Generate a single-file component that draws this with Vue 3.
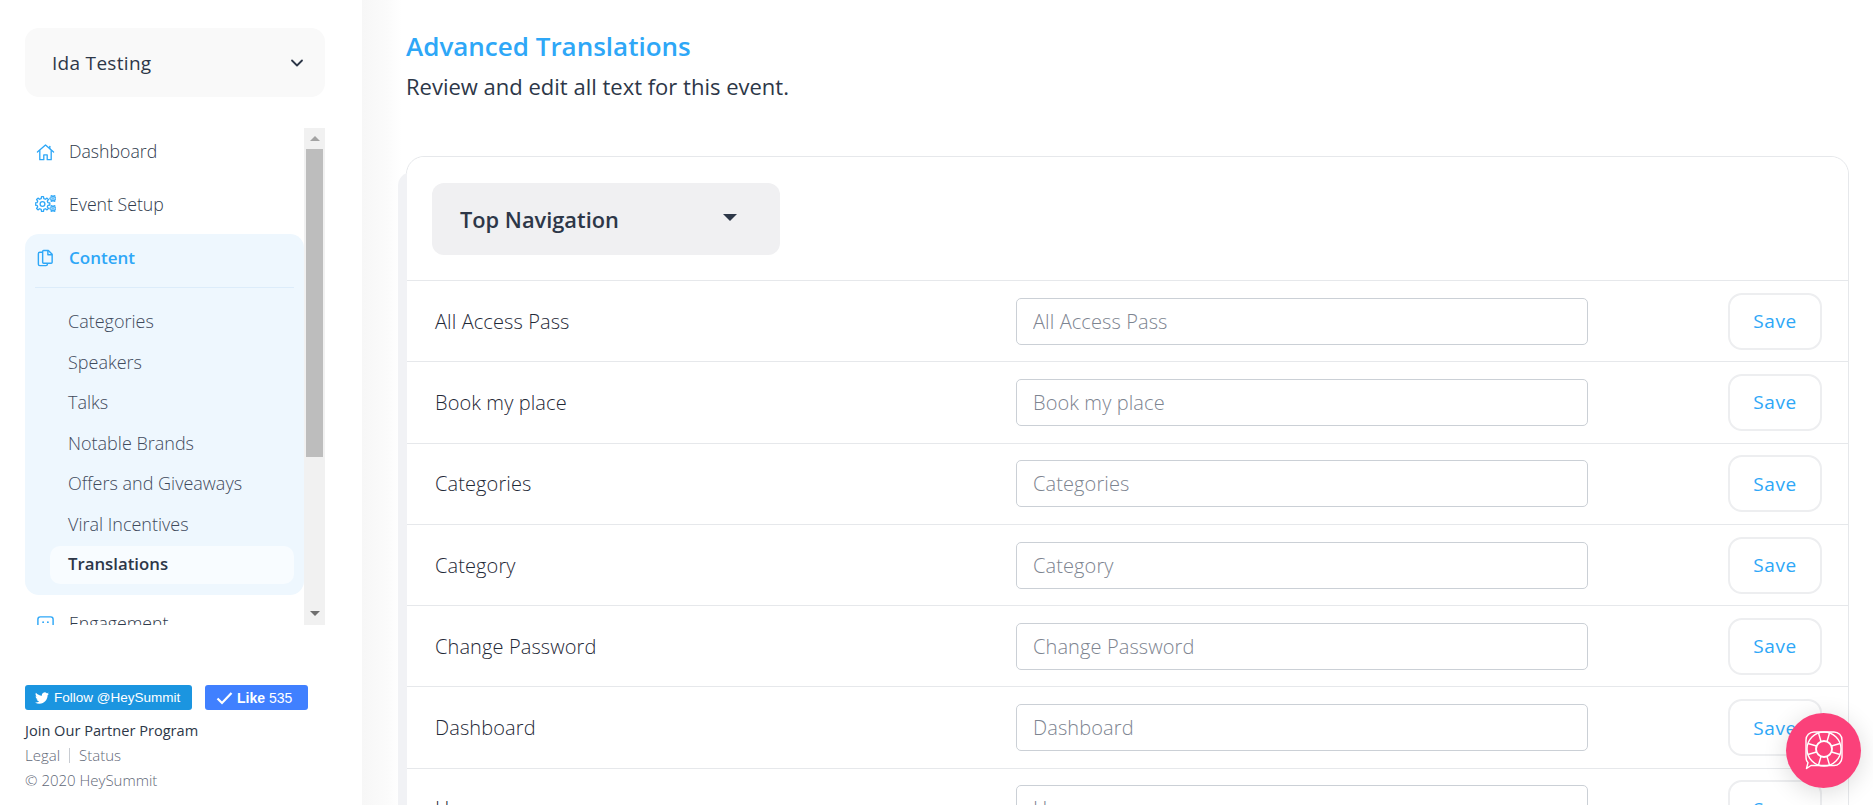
<script setup>
const sub = ['Categories', 'Speakers', 'Talks', 'Notable Brands', 'Offers and Giveaways', 'Viral Incentives']
const rows = ['All Access Pass', 'Book my place', 'Categories', 'Category', 'Change Password', 'Dashboard', 'Home']

function gear(cx, cy, outer, inner, teeth) {
  const step = (Math.PI * 2) / teeth
  const pts = []
  for (let i = 0; i < teeth; i++) {
    const a = i * step
    const offs = [[-0.3, inner], [-0.17, outer], [0.17, outer], [0.3, inner]]
    for (const [o, r] of offs) {
      const t = a + o * step
      pts.push((cx + r * Math.cos(t)).toFixed(2) + ' ' + (cy + r * Math.sin(t)).toFixed(2))
    }
  }
  return 'M' + pts.join('L') + 'Z'
}
const bigGear = gear(7.5, 9, 7.4, 5.6, 8)
const gearA = gear(18, 3.5, 3.2, 2.2, 6)
const gearB = gear(18, 13.5, 3.2, 2.2, 6)
</script>

<template>
  <div class="page">
    <aside class="sidebar">
      <div class="org">
        <span>Ida Testing</span>
        <svg width="14" height="14" viewBox="0 0 14 14" fill="none" stroke="#2d3748" stroke-width="1.8" stroke-linecap="round" stroke-linejoin="round"><path d="M2 4.500 7 9.500 12 4.500" /></svg>
      </div>
      <div class="scrollbox">
        <nav class="nav">
          <a class="item">
            <svg class="ico" viewBox="0 0 20 20" fill="none" stroke="#2ea7f7" stroke-width="1.4" stroke-linejoin="round" stroke-linecap="round"><path d="M1.500 9.500 10 2l8.500 7.500" /><path d="M4 8v9.500h4.200v-5h3.600v5H16V8" /><path d="M14.500 3.500v2.500" /></svg>
            Dashboard
          </a>
          <a class="item">
            <svg class="ico gears" viewBox="0 0 21 17" fill="none" stroke="#2ea7f7" stroke-width="1.300" stroke-linejoin="round"><path :d="bigGear" /><circle cx="7.500" cy="9" r="2.400" /><path :d="gearA" stroke-width="1.100" /><circle cx="18" cy="3.500" r=".9" stroke-width="1" /><path :d="gearB" stroke-width="1.100" /><circle cx="18" cy="13.500" r=".9" stroke-width="1" /></svg>
            Event Setup
          </a>
          <div class="group">
            <a class="item active">
              <svg class="ico" viewBox="0 0 20 20" fill="none" stroke="#2ea7f7" stroke-width="1.500" stroke-linejoin="round"><path d="M7 3.500h-3a1.500 1.500 0 0 0-1.500 1.500v11A1.500 1.500 0 0 0 4 17.500h6.500A1.500 1.500 0 0 0 12 16v-1" /><path d="M7 2.500A1 1 0 0 1 8 1.500h5l4 4v8.500a1 1 0 0 1-1 1H8a1 1 0 0 1-1-1Z" /><path d="M12.500 1.500v4.500H17" /></svg>
              Content
            </a>
            <ul class="sublist">
              <li v-for="s in sub" :key="s" class="subitem">{{ s }}</li>
              <li class="subitem current">Translations</li>
            </ul>
          </div>
          <a class="item">
            <svg class="ico" viewBox="0 0 20 20" fill="none" stroke="#2ea7f7" stroke-width="1.500"><rect x="2" y="2" width="16" height="16" rx="2.500" /><circle cx="7.500" cy="7.500" r="1" fill="#2ea7f7" stroke="none" /><circle cx="12.500" cy="7.500" r="1" fill="#2ea7f7" stroke="none" /><path d="M6.500 11.500c2 2 5 2 7 0" /></svg>
            Engagement
          </a>
        </nav>
        <div class="scrollbar">
          <span class="arrow up"></span>
          <span class="thumb"></span>
          <span class="arrow down"></span>
        </div>
      </div>
      <footer class="foot">
        <div class="social">
          <a class="tw">
            <svg width="14" height="14" viewBox="0 0 24 24" fill="#fff"><path d="M23.950 4.570a10 10 0 0 1-2.820.770 4.960 4.960 0 0 0 2.160-2.720c-.950.550-2 .950-3.130 1.180a4.920 4.920 0 0 0-8.380 4.480C7.690 8.090 4.070 6.130 1.640 3.160a4.820 4.820 0 0 0-.670 2.480c0 1.710.870 3.210 2.190 4.100a4.900 4.900 0 0 1-2.230-.620v.060a4.920 4.920 0 0 0 3.950 4.830 5 5 0 0 1-2.210.080 4.940 4.940 0 0 0 4.600 3.420A9.870 9.870 0 0 1 0 19.540a14 14 0 0 0 7.560 2.210c9.050 0 14-7.500 14-13.980 0-.210 0-.420-.010-.630a10 10 0 0 0 2.400-2.570Z" /></svg>
            Follow @HeySummit
          </a>
          <a class="like">
            <svg width="17" height="14" viewBox="0 0 17 14" fill="none" stroke="#fff" stroke-width="2.200"><path d="M1.500 7.500 6 12 15.500 2" /></svg>
            <b>Like</b> 535
          </a>
        </div>
        <div class="join">Join Our Partner Program</div>
        <div class="legal">Legal<i></i>Status</div>
        <div class="legal copy">© 2020 HeySummit</div>
      </footer>
    </aside>

    <main class="main">
      <h1>Advanced Translations</h1>
      <p class="lead">Review and edit all text for this event.</p>
      <section class="card">
        <div class="card-top">
          <div class="select">
            <span>Top Navigation</span>
            <i class="caret"></i>
          </div>
        </div>
        <div v-for="r in rows" :key="r" class="row">
          <label>{{ r }}</label>
          <input type="text" :placeholder="r" />
          <button type="button">Save</button>
        </div>
      </section>
    </main>

    <button type="button" class="help" aria-label="Help">
      <svg width="44" height="44" viewBox="0 0 44 44" fill="none" stroke="#fff" stroke-width="1.400" stroke-linejoin="round">
        <path d="M4.500 39.500 9 36.500H31a8 8 0 0 0 9-8V11a8 8 0 0 0-8-8H12a8 8 0 0 0-8 8v17c0 2.500 .5 4.500 2 5.500Z" />
        <circle cx="22" cy="20" r="17" />
        <circle cx="22" cy="20" r="8" stroke-width="1.900" />
        <path d="M16.500 4 19 12.500M27.500 4 25 12.500M16.500 36 19 27.500M27.500 36 25 27.500M6 14.500 14.500 17M6 25.500 14.500 23M38 14.500 29.500 17M38 25.500 29.500 23" />
      </svg>
    </button>
  </div>
</template>

<style>
html, body { margin: 0; background: #fff; }
</style>

<style scoped>
.page {
  display: flex;
  height: 805px;
  overflow: hidden;
  position: relative;
  font-family: "Open Sans", Lato, sans-serif;
  color: #2d3748;
  background: #fff;
}
.sidebar {
  width: 362px;
  flex: none;
  box-sizing: border-box;
  padding: 28px 37px 0 25px;
  display: flex;
  flex-direction: column;
}
.org {
  height: 69px;
  flex: none;
  display: flex;
  align-items: center;
  justify-content: space-between;
  padding: 0 21px 0 27px;
  background: #f9f9f9;
  border-radius: 14px;
  font-size: 19px;
  font-weight: 400;
  letter-spacing: .3px;
}
.scrollbox {
  margin-top: 31px;
  height: 497px;
  flex: none;
  display: flex;
  overflow: hidden;
}
.nav {
  flex: 1;
  min-width: 0;
  display: flex;
  flex-direction: column;
  gap: 5px;
}
.item {
  height: 48px;
  box-sizing: border-box;
  padding: 0 0 2px 44px;
  flex: none;
  display: flex;
  align-items: center;
  font-size: 17.700px;
  font-weight: 300;
  color: #2f3a4c;
  position: relative;
}
.ico {
  position: absolute;
  left: 11px;
  top: 15px;
  width: 19px;
  height: 19px;
}
.gears {
  left: 10px;
  top: 14px;
  width: 21px;
  height: 17px;
}
.group {
  background: #eef7fe;
  border-radius: 14px;
  padding-bottom: 11px;
  flex: none;
}
.active {
  color: #2ea7f7;
  font-weight: 600;
  font-size: 17px;
}
.sublist {
  list-style: none;
  margin: 5px 10px 0;
  padding: 15px 0 0;
  border-top: 1px solid #dcecfa;
  display: flex;
  flex-direction: column;
  gap: 2.500px;
}
.subitem {
  height: 38px;
  margin-left: 15px;
  padding-left: 18px;
  line-height: 36px;
  font-size: 18px;
  font-weight: 300;
  color: #3f4a5c;
  border-radius: 10px;
}
.current {
  background: #f8fcff;
  font-weight: 600;
  font-size: 16.800px;
  color: #2d3748;
}
.scrollbar {
  width: 21px;
  flex: none;
  background: #f1f1f1;
  display: flex;
  flex-direction: column;
  align-items: center;
  position: relative;
}
.thumb {
  width: 17px;
  height: 308px;
  margin-top: 21px;
  background: #bdbdbd;
}
.arrow {
  position: absolute;
  width: 0;
  height: 0;
  border-left: 5px solid transparent;
  border-right: 5px solid transparent;
}
.up { top: 8px; border-bottom: 5px solid #a3a3a3; }
.down { bottom: 9px; border-top: 5px solid #6f6f6f; }
.foot {
  margin-top: 60px;
  font-size: 14.600px;
}
.social {
  display: flex;
  gap: 13px;
  height: 25px;
  width: 320px;
  font-family: "Liberation Sans", Arial, sans-serif;
  font-size: 13.500px;
  color: #fff;
}
.tw, .like {
  display: flex;
  align-items: center;
  border-radius: 3px;
  box-sizing: border-box;
  height: 25px;
}
.tw {
  width: 167px;
  gap: 5px;
  padding-left: 10px;
  background: #1b95e0;
}
.like {
  width: 103px;
  gap: 4px;
  padding-left: 11px;
  background: #4080ff;
  font-size: 14px;
}
.join {
  margin-top: 10px;
  line-height: 20px;
  color: #2d3748;
}
.legal {
  margin-top: 5px;
  line-height: 20px;
  font-size: 15px;
  font-weight: 300;
  color: #5f6877;
  display: flex;
  align-items: center;
}
.legal i {
  width: 1px;
  height: 15px;
  margin: 0 9px;
  background: #c8ccd2;
}
.main {
  flex: 1;
  min-width: 0;
  box-sizing: border-box;
  padding: 31px 24px 0 44px;
  background: linear-gradient(90deg, #f7f7f7 0, #fbfbfb 25px, #fff 40px);
}
h1 {
  margin: 0;
  font-size: 26px;
  line-height: 30px;
  font-weight: 600;
  color: #2ea7f7;
}
.lead {
  margin: 10px 0 0;
  font-size: 22px;
  line-height: 31px;
  font-weight: 400;
  color: #2d3748;
}
.card {
  margin-top: 54px;
  background: #fff;
  border: 1px solid #e6e8eb;
  border-radius: 18px;
  position: relative;
}
.card::before {
  content: "";
  position: absolute;
  left: -9px;
  top: 15px;
  bottom: 0;
  width: 30px;
  background: #f1f2f5;
  border-radius: 14px 0 0 0;
}
.card-top {
  position: relative;
  background: #fff;
  border-radius: 18px 18px 0 0;
  height: 124px;
  box-sizing: border-box;
  padding: 26px 25px 0;
  border-bottom: 1px solid #e6e8eb;
}
.select {
  width: 348px;
  height: 72px;
  box-sizing: border-box;
  padding: 0 43px 0 28px;
  background: #f0f0f2;
  border-radius: 12px;
  display: flex;
  align-items: center;
  justify-content: space-between;
  font-size: 21.800px;
  font-weight: 600;
}
.caret {
  width: 0;
  height: 0;
  border-left: 7px solid transparent;
  border-right: 7px solid transparent;
  border-top: 7px solid #2d3748;
  margin-top: -3px;
}
.row {
  position: relative;
  height: 80.300px;
  padding: 0 26px 0 28px;
  display: flex;
  align-items: center;
  background: #fff;
  border-bottom: 1px solid #e6e8eb;
}
.row label {
  width: 581px;
  font-size: 20px;
  font-weight: 300;
  letter-spacing: .1px;
  color: #1f2937;
}
.row input {
  width: 572px;
  height: 47px;
  box-sizing: border-box;
  padding: 0 16px;
  border: 1px solid #cbd0d6;
  border-radius: 5px;
  font: 300 20px "Open Sans", Lato, sans-serif;
  letter-spacing: .1px;
  outline: none;
}
.row input::placeholder { color: #7d8490; opacity: 1; }
.row button {
  margin-left: auto;
  width: 94px;
  height: 57px;
  background: #fff;
  border: 2px solid #edeef0;
  border-radius: 14px;
  color: #2ea7f7;
  font: 400 19px "Open Sans", Lato, sans-serif;
  letter-spacing: .6px;
}
.help {
  position: absolute;
  left: 1786px;
  top: 713px;
  width: 75px;
  height: 75px;
  padding: 0;
  border: 0;
  border-radius: 50%;
  background: #fb417a;
  box-shadow: 0 4px 24px rgba(0, 0, 0, .14);
  display: flex;
  align-items: center;
  justify-content: center;
}
</style>
